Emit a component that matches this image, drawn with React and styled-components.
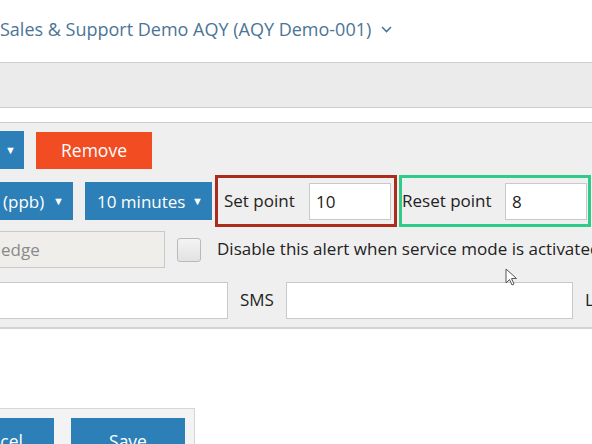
import React from "react";
import styled, { createGlobalStyle } from "styled-components";

const Global = createGlobalStyle`
  html, body {
    margin: 0;
    padding: 0;
    background: #ffffff;
    overflow: hidden;
  }
  body {
    font-family: "Open Sans", "Noto Sans", "Liberation Sans", sans-serif;
    color: #222;
  }
`;

const Page = styled.div`
  position: relative;
  width: 592px;
  height: 444px;
  overflow: hidden;
`;

const TitleBar = styled.div`
  height: 62px;
  display: flex;
  align-items: center;
  gap: 10px;
  padding-bottom: 4px;
  box-sizing: border-box;
  color: #4b7596;
  font-size: 18px;
  white-space: nowrap;
`;

const Band = styled.div`
  height: 46px;
  box-sizing: border-box;
  background: #ebebeb;
  border-top: 1px solid #cdcdcd;
  border-bottom: 1px solid #cdcdcd;
  margin-bottom: 14px;
`;

const Panel = styled.div`
  background: #efefef;
  border-top: 1px solid #cfcfcf;
  border-bottom: 2px solid #d3d3d3;
  padding: 8px 0 8px 0;
  display: flex;
  flex-direction: column;
`;

const Row = styled.div`
  display: flex;
  align-items: center;
  gap: ${(p) => p.$gap ?? 12}px;
  margin-top: ${(p) => p.$top ?? 0}px;
  white-space: nowrap;
`;

const Select = styled.div`
  width: ${(p) => p.$w}px;
  height: 38px;
  box-sizing: border-box;
  background: #2d80b7;
  color: #fff;
  font-size: 17px;
  display: flex;
  align-items: center;
  justify-content: ${(p) => (p.$right ? "flex-end" : "space-between")};
  padding: 0 ${(p) => (p.$right ? 8 : 9)}px 0 ${(p) => p.$pl ?? 4}px;
  flex-shrink: 0;
`;

const Caret = styled.span`
  font-size: 11px;
  line-height: 1;
  margin-top: -2px;
`;

const Button = styled.div`
  width: ${(p) => p.$w}px;
  height: ${(p) => p.$h ?? 37}px;
  box-sizing: border-box;
  background: ${(p) => p.$bg};
  color: #fff;
  font-size: 17.5px;
  display: flex;
  align-items: center;
  justify-content: ${(p) => (p.$end ? "flex-end" : "center")};
  flex-shrink: 0;
  overflow: hidden;
  padding-top: ${(p) => p.$pt ?? 0}px;
  padding-right: ${(p) => p.$pr ?? 0}px;
`;

const PointBox = styled.div`
  height: 52px;
  box-sizing: border-box;
  width: ${(p) => p.$w}px;
  border: 3px solid ${(p) => p.$color};
  display: flex;
  align-items: center;
  justify-content: space-between;
  padding: 0 ${(p) => p.$pr}px 0 ${(p) => p.$pl}px;
  flex-shrink: 0;
`;

const Label = styled.span`
  font-size: 17px;
  color: #222;
  padding-bottom: 2px;
`;

const Input = styled.div`
  width: ${(p) => p.$w}px;
  height: 37px;
  box-sizing: border-box;
  background: ${(p) => (p.$disabled ? "#efeeea" : "#ffffff")};
  border: 1px solid #c9c9c9;
  ${(p) => p.$noLeft && "border-left: none;"}
  display: flex;
  align-items: center;
  padding-left: ${(p) => p.$pl ?? 6}px;
  font-size: 17px;
  color: ${(p) => (p.$disabled ? "#8a8a8a" : "#222")};
  flex-shrink: 0;
`;

const Checkbox = styled.div`
  width: 24px;
  height: 24px;
  box-sizing: border-box;
  border: 1px solid #b9b9b9;
  border-radius: 3px;
  background: linear-gradient(#f4f4f4, #e2e2e2);
  flex-shrink: 0;
  margin-right: 4px;
`;

const Footer = styled.div`
  margin-top: 79px;
  width: 195px;
  box-sizing: border-box;
  background: #f3f3f3;
  border-top: 1px solid #d6d6d6;
  border-right: 1px solid #d6d6d6;
  padding-top: 9px;
  display: flex;
  gap: 17px;
  height: 40px;
`;

const Cursor = styled.svg`
  position: absolute;
  left: 505px;
  top: 268px;
`;

function Chevron() {
  return (
    <svg width="11" height="7" viewBox="0 0 11 7">
      <path d="M1 1 L5.5 5.5 L10 1" fill="none" stroke="#4b7596" strokeWidth="1.6" />
    </svg>
  );
}

export default function App() {
  return (
    <Page>
      <Global />
      <TitleBar>
        <span>Sales &amp; Support Demo AQY (AQY Demo-001)</span>
        <Chevron />
      </TitleBar>
      <Band />
      <Panel>
        <Row>
          <Select $w={24} $right>
            <Caret>▼</Caret>
          </Select>
          <Button $w={116} $bg="#f24d22">Remove</Button>
        </Row>
        <Row $top={6} $gap={0}>
          <Select $w={73} $pl={3}>
            <span>(ppb)</span>
            <Caret>▼</Caret>
          </Select>
          <Select $w={127} $pl={12} style={{ marginLeft: 12 }}>
            <span>10 minutes</span>
            <Caret>▼</Caret>
          </Select>
          <PointBox $w={182} $color="#ab2b1c" $pl={6} $pr={3} style={{ marginLeft: 3 }}>
            <Label>Set point</Label>
            <Input $w={82}>10</Input>
          </PointBox>
          <PointBox $w={192} $color="#2fcb88" $pl={0} $pr={1} style={{ marginLeft: 2 }}>
            <Label>Reset point</Label>
            <Input $w={82}>8</Input>
          </PointBox>
        </Row>
        <Row $top={4}>
          <Input $w={165} $disabled $noLeft $pl={1}>edge</Input>
          <Checkbox />
          <Label>Disable this alert when service mode is activated</Label>
        </Row>
        <Row $top={14}>
          <Input $w={228} $noLeft />
          <Label>SMS</Label>
          <Input $w={287} />
          <Label>Line</Label>
        </Row>
      </Panel>
      <Footer>
        <Button $w={54} $h={40} $bg="#2d80b7" $pt={6} $pr={31} $end>
          Cancel
        </Button>
        <Button $w={114} $h={40} $bg="#2d80b7" $pt={6}>Save</Button>
      </Footer>
      <Cursor width="13" height="19" viewBox="0 0 13 19">
        <path d="M1 1 L1 15 L4.5 11.5 L7 17 L9 16 L6.5 10.5 L11.5 10.5 Z" fill="#fff" stroke="#555" strokeWidth="1" />
      </Cursor>
    </Page>
  );
}
